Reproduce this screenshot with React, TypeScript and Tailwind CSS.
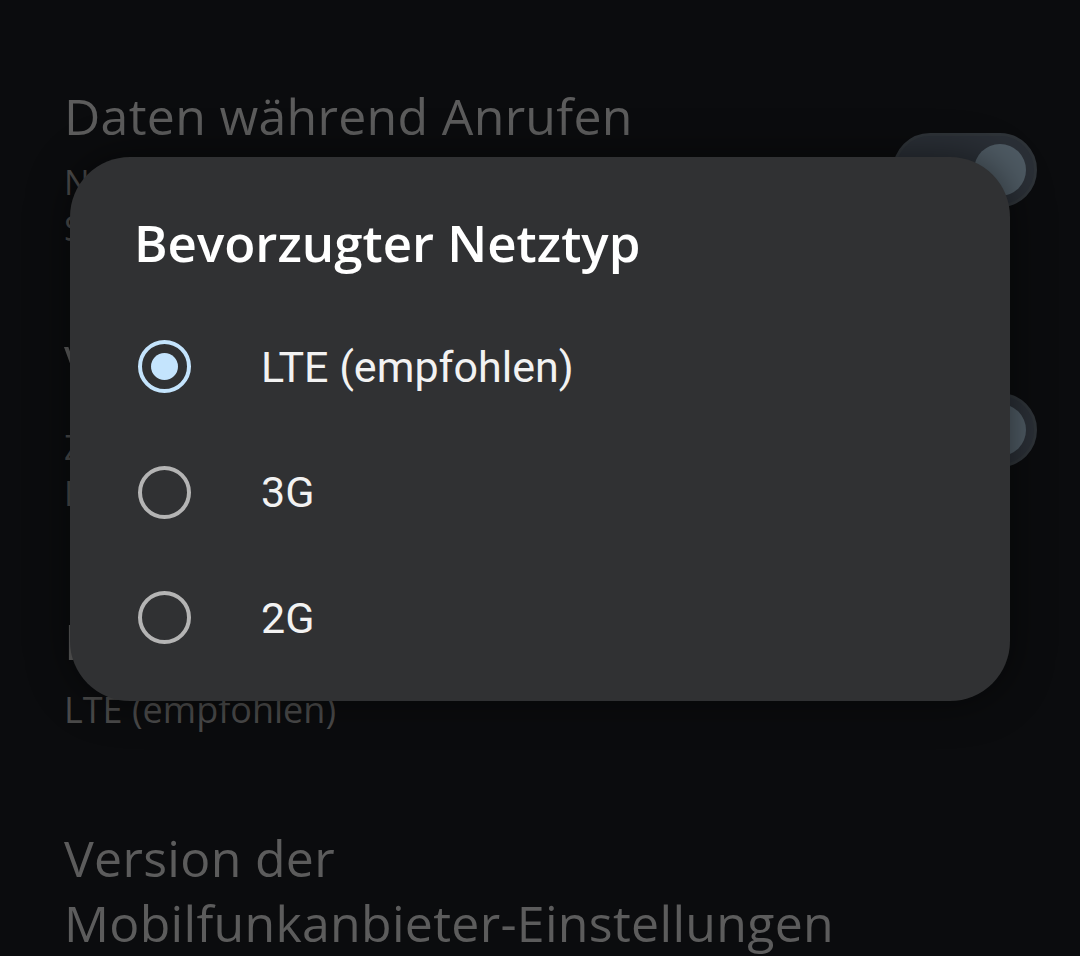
import React from "react";

const sans = { fontFamily: "'Open Sans', Roboto, sans-serif" };

const options = [
    { label: "LTE (empfohlen)", selected: true },
    { label: "3G", selected: false },
    { label: "2G", selected: false },
];

function Switch() {
    return (
        <div className="flex h-[74px] w-[144px] items-center justify-end rounded-full border-[3px] border-[#2e3338] bg-[#2a2f36] pr-[8px]">
            <div className="h-[52px] w-[52px] rounded-full bg-[#4e5a63]" />
        </div>
    );
}

function Radio({ selected }: { selected: boolean }) {
    if (selected) {
        return (
            <div className="flex h-[53px] w-[53px] items-center justify-center rounded-full border-[4px] border-[#c4e4fd]">
                <div className="h-[27px] w-[27px] rounded-full bg-[#c4e4fd]" />
            </div>
        );
    }
    return <div className="h-[53px] w-[53px] rounded-full border-[4px] border-[#b4b4b4]" />;
}

export default function App() {
    return (
        <div className="relative h-[956px] w-[1080px] overflow-hidden bg-[#0b0c0e]" style={sans}>
            {/* settings list, dimmed behind the dialog */}
            <div className="flex flex-col pl-[64px] pr-[43px]">
                <div className="mt-[86px] flex items-start justify-between">
                    <div className="flex flex-col">
                        <h2 className="text-[50px] leading-[60px] tracking-[0.3px] text-[#5c5c5c]">Daten während Anrufen</h2>
                        <p className="mt-[13px] text-[34px] leading-[46px] text-[#4a4a4a]">
                            Nur während Anrufen mobile Daten dieser
                            <br />
                            SIM verwenden
                        </p>
                    </div>
                    <div className="mt-[47px]">
                        <Switch />
                    </div>
                </div>
                <div className="mt-[82px] flex items-start justify-between">
                    <div className="flex flex-col">
                        <h2 className="text-[50px] leading-[60px] tracking-[0.3px] text-[#5c5c5c]">VoLTE</h2>
                        <p className="mt-[31px] text-[34px] leading-[46px] text-[#4a4a4a]">
                            Zur Verbesserung der Sprachkommunikation
                            <br />
                            LTE-Dienste verwenden
                        </p>
                    </div>
                    <div className="mt-[60px]">
                        <Switch />
                    </div>
                </div>
                <h2 className="mt-[95px] text-[50px] leading-[60px] tracking-[0.3px] text-[#5c5c5c]">Bevorzugter Netztyp</h2>
                <p className="mt-[16px] text-[36px] leading-[46px] text-[#4a4a4a]">LTE (empfohlen)</p>
                <h2 className="mt-[93px] text-[50px] leading-[65px] tracking-[0.3px] text-[#5c5c5c]">
                    Version der
                    <br />
                    Mobilfunkanbieter-Einstellungen
                </h2>
            </div>

            {/* dialog */}
            <div className="absolute left-[70px] top-[157px] flex h-[544px] w-[940px] flex-col rounded-[60px] bg-[#303133] pl-[64px] shadow-[0_0_40px_rgba(0,0,0,0.5)]">
                <h1 className="mt-[53px] text-[51px] font-semibold leading-[64px] text-white">Bevorzugter Netztyp</h1>
                <ul className="ml-[4px] mt-[30px] flex flex-col">
                    {options.map((o) => (
                        <li key={o.label} className="flex h-[125.5px] items-center">
                            <Radio selected={o.selected} />
                            <span
                                className="ml-[70px] text-[43px] text-[#f2f2f2]"
                                style={{ fontFamily: "Roboto, sans-serif" }}
                            >
                                {o.label}
                            </span>
                        </li>
                    ))}
                </ul>
            </div>
        </div>
    );
}
